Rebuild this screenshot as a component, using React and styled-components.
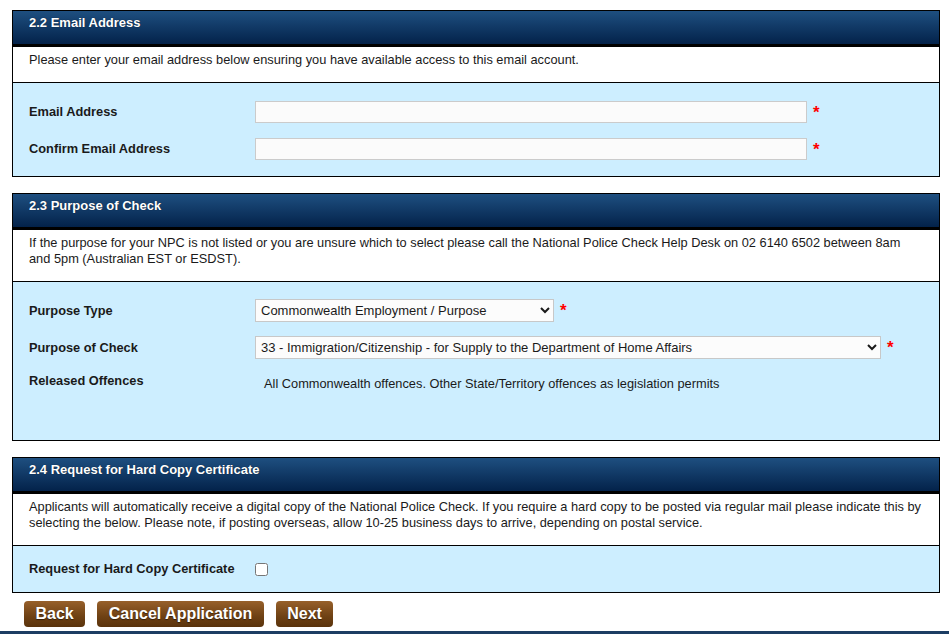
import React from 'react';
import styled, { createGlobalStyle } from 'styled-components';

const GlobalStyle = createGlobalStyle`
  html, body {
    margin: 0;
    padding: 0;
    background: #ffffff;
    font-family: "Liberation Sans", Arial, sans-serif;
    font-size: 13px;
    color: #1a1a1a;
  }
`;

const Page = styled.div`
  width: 949px;
  height: 634px;
  overflow: hidden;
  position: relative;
  padding-top: 10px;
  box-sizing: border-box;
`;

const Panel = styled.section`
  width: 928px;
  margin: 0 0 16px 12px;
  border: 1px solid #000;
  border-top: none;
  box-sizing: border-box;
`;

const Header = styled.h2`
  margin: 0 -1px;
  height: 37px;
  padding: 4px 16px 0 16px;
  box-sizing: border-box;
  background: linear-gradient(#1e4f80, #03224a);
  border: 1px solid #000;
  border-bottom: 3px solid #000;
  color: #fff;
  font-size: 13px;
  font-weight: bold;
  line-height: 16px;
  text-shadow: 0 0 1px rgba(0, 0, 0, 0.6);
`;

const Desc = styled.p`
  margin: 0;
  padding: 5px 16px 14px 16px;
  font-size: 12.8px;
  line-height: 16px;
  background: #fff;
  border-bottom: 1px solid #000;
`;

const Body = styled.div`
  background: #cdeeff;
  padding: ${p => p.$pad || '18px 16px 16px 16px'};
  display: grid;
  grid-template-columns: 226px 1fr;
  row-gap: ${p => p.$gap || '15px'};
  align-items: center;
`;

const Label = styled.label`
  font-weight: bold;
  font-size: 12.8px;
  line-height: 16px;
  align-self: ${p => (p.$top ? 'start' : 'center')};
`;

const Field = styled.div`
  display: flex;
  align-items: flex-start;
  gap: 6px;
`;

const TextInput = styled.input`
  width: 552px;
  height: 22px;
  box-sizing: border-box;
  border: 1px solid #cbcbcb;
  background: #fbfbfb;
  font-family: inherit;
  font-size: 13px;
  margin: 0;
  padding: 2px 4px;
  outline: none;
`;

const Select = styled.select`
  width: ${p => p.$w}px;
  height: 23px;
  box-sizing: border-box;
  border: 1px solid #c8c8c8;
  border-radius: 0;
  background: #fcfcfc;
  font-family: inherit;
  font-size: 13px;
  color: #1a1a1a;
  margin: 0;
  padding: 0 1px;
  outline: none;
`;

const Req = styled.span`
  color: #f00;
  font-weight: bold;
  font-size: 17px;
  line-height: 17px;
  margin-top: 3px;
`;

const Value = styled.div`
  padding: 3px 0 0 9px;
  font-size: 12.8px;
  line-height: 16px;
  align-self: start;
`;

const Spacer = styled.div`
  grid-column: 1 / -1;
  height: ${p => p.$h}px;
`;

const Check = styled.input`
  width: 13px;
  height: 13px;
  margin: 0;
  accent-color: #666;
`;

const Buttons = styled.div`
  display: flex;
  gap: 12px;
  margin: -8px 0 0 24px;
`;

const Button = styled.button`
  height: 26px;
  padding: 0 11.5px;
  border: none;
  border-radius: 4px;
  background: linear-gradient(#97602a, #6e4114 60%, #5a330c);
  color: #fff;
  font-family: "Liberation Sans", Arial, sans-serif;
  font-size: 16px;
  font-weight: bold;
  text-shadow: 0 1px 1px rgba(0, 0, 0, 0.5);
  cursor: pointer;
`;

const BottomBar = styled.div`
  position: absolute;
  left: 0;
  right: 0;
  bottom: 0;
  height: 3px;
  background: #1c3d63;
`;

export default function App() {
  return (
    <Page>
      <GlobalStyle />

      <Panel>
        <Header>2.2 Email Address</Header>
        <Desc>Please enter your email address below ensuring you have available access to this email account.</Desc>
        <Body>
          <Label>Email Address</Label>
          <Field>
            <TextInput type="text" />
            <Req>*</Req>
          </Field>
          <Label>Confirm Email Address</Label>
          <Field>
            <TextInput type="text" />
            <Req>*</Req>
          </Field>
        </Body>
      </Panel>

      <Panel>
        <Header>2.3 Purpose of Check</Header>
        <Desc>
          If the purpose for your NPC is not listed or you are unsure which to select please call the National Police Check Help Desk on 02 6140 6502 between 8am and 5pm (Australian EST or ESDST).
        </Desc>
        <Body $gap="14px" $pad="17px 16px 0 16px">
          <Label>Purpose Type</Label>
          <Field>
            <Select $w={299} defaultValue="cw">
              <option value="cw">Commonwealth Employment / Purpose</option>
            </Select>
            <Req>*</Req>
          </Field>
          <Label>Purpose of Check</Label>
          <Field>
            <Select $w={626} defaultValue="33">
              <option value="33">33 - Immigration/Citizenship - for Supply to the Department of Home Affairs</option>
            </Select>
            <Req>*</Req>
          </Field>
          <Label $top>Released Offences</Label>
          <Value>All Commonwealth offences. Other State/Territory offences as legislation permits</Value>
          <Spacer $h={34} />
        </Body>
      </Panel>

      <Panel>
        <Header>2.4 Request for Hard Copy Certificate</Header>
        <Desc>
          Applicants will automatically receive a digital copy of the National Police Check. If you require a hard copy to be posted via regular mail please indicate this by selecting the below. Please note, if posting overseas, allow 10-25 business days to arrive, depending on postal service.
        </Desc>
        <Body $pad="15px 16px 15px 16px">
          <Label>Request for Hard Copy Certificate</Label>
          <Field>
            <Check type="checkbox" />
          </Field>
        </Body>
      </Panel>

      <Buttons>
        <Button>Back</Button>
        <Button>Cancel Application</Button>
        <Button>Next</Button>
      </Buttons>

      <BottomBar />
    </Page>
  );
}
